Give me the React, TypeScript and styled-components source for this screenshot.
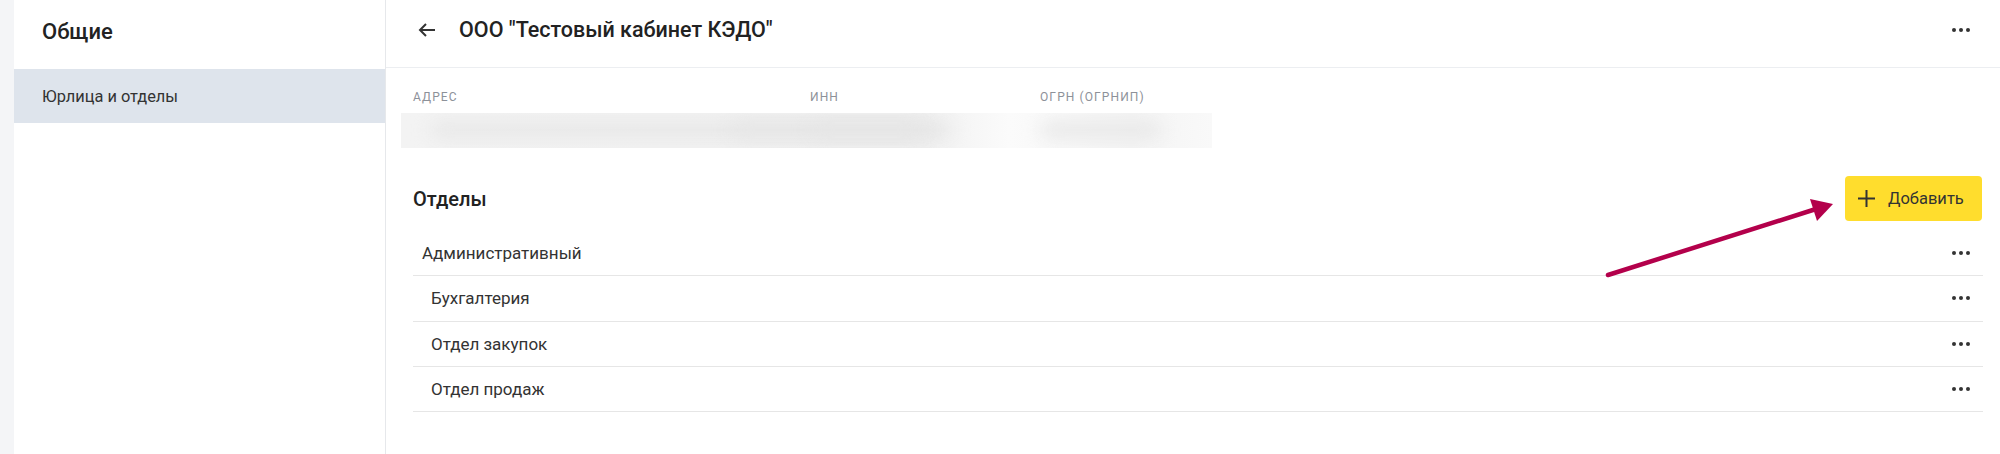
import React, { FC } from "react";
import styled, { createGlobalStyle } from "styled-components";

const GlobalStyle = createGlobalStyle`
  body {
    margin: 0;
    font-family: Roboto, "Noto Sans", sans-serif;
    color: #333333;
    background: #ffffff;
  }
`;

const departments = [
  { name: "Административный", level: 0 },
  { name: "Бухгалтерия", level: 1 },
  { name: "Отдел закупок", level: 1 },
  { name: "Отдел продаж", level: 1 },
];

const Page = styled.div`
  position: relative;
  display: flex;
  height: 454px;
  overflow: hidden;
`;

const Strip = styled.div`
  width: 14px;
  flex-shrink: 0;
  background: #f4f5f7;
`;

const Sidebar = styled.aside`
  width: 371px;
  flex-shrink: 0;
  border-right: 1px solid #e6e8eb;
`;

const SidebarTitle = styled.div`
  height: 69px;
  box-sizing: border-box;
  display: flex;
  align-items: center;
  padding: 0 0 7px 28px;
  font-size: 22px;
  font-weight: 500;
  color: #222;
`;

const SidebarItem = styled.div<{ $active?: boolean }>`
  height: 54px;
  display: flex;
  align-items: center;
  padding-left: 28px;
  font-size: 16.4px;
  background: ${(p) => (p.$active ? "#dee4ec" : "transparent")};
`;

const Main = styled.main`
  flex: 1;
  display: flex;
  flex-direction: column;
`;

const Header = styled.header`
  height: 68px;
  box-sizing: border-box;
  display: flex;
  align-items: center;
  padding: 0 30px 8px 32px;
  border-bottom: 1px solid #eceef1;
  gap: 23px;
`;

const Title = styled.h1`
  flex: 1;
  margin: 0;
  font-size: 21.5px;
  font-weight: 500;
  color: #222;
`;

const Content = styled.div`
  padding: 23px 17px 0 27px;
`;

const InfoLabels = styled.div`
  display: grid;
  grid-template-columns: 397px 230px 200px;
`;

const Label = styled.div`
  font-size: 12px;
  line-height: 13px;
  letter-spacing: 1.1px;
  text-transform: uppercase;
  color: #8d9199;
`;

const Blurred = styled.div`
  position: relative;
  margin: 9px 0 0 -12px;
  width: 811px;
  height: 35px;
  overflow: hidden;
  background: linear-gradient(90deg, #f3f3f3 0%, #f1f1f1 65%, #fbfbfb 75%, #f4f4f4 90%, #f9f9f9 100%);
`;

const Smudge = styled.span<{ $left: number; $width: number }>`
  position: absolute;
  top: 10px;
  left: ${(p) => p.$left}px;
  width: ${(p) => p.$width}px;
  height: 14px;
  border-radius: 7px;
  background: #e6e6e6;
  filter: blur(9px);
`;

const SectionHead = styled.div`
  margin-top: 28px;
  display: flex;
  align-items: center;
  justify-content: space-between;
`;

const SectionTitle = styled.h2`
  margin: 0;
  font-size: 20px;
  font-weight: 500;
  color: #222;
`;

const AddButton = styled.button`
  width: 137px;
  height: 45px;
  margin-right: 1px;
  display: flex;
  align-items: center;
  gap: 13px;
  padding: 0 0 0 13px;
  border: none;
  border-radius: 4px;
  background: #ffdd2d;
  font-family: inherit;
  font-size: 16.5px;
  color: #333;
`;

const List = styled.div`
  margin-top: 10px;
`;

const Row = styled.div<{ $level: number }>`
  height: 44.3px;
  display: flex;
  align-items: center;
  justify-content: space-between;
  padding: 0 13px 0 ${(p) => 9 + p.$level * 9}px;
  border-bottom: 1px solid #e6e6e6;
  font-size: 17px;
  color: #333;
`;

const Dots: FC = () => (
  <svg width="18" height="4" viewBox="0 0 18 4">
    <circle cx="2" cy="2" r="2" fill="#333" />
    <circle cx="9" cy="2" r="2" fill="#333" />
    <circle cx="16" cy="2" r="2" fill="#333" />
  </svg>
);

const BackIcon: FC = () => (
  <svg width="18" height="16" viewBox="0 0 18 16" fill="none" stroke="#333" strokeWidth="2">
    <path d="M17 8H2" />
    <path d="M8 2L2 8l6 6" />
  </svg>
);

const PlusIcon: FC = () => (
  <svg width="17" height="17" viewBox="0 0 17 17" stroke="#333" strokeWidth="2">
    <path d="M8.5 0v17M0 8.5h17" />
  </svg>
);

const Annotation = styled.svg`
  position: absolute;
  left: 0;
  top: 0;
  pointer-events: none;
`;

export default function App() {
  return (
    <>
      <GlobalStyle />
      <Page>
        <Strip />
        <Sidebar>
          <SidebarTitle>Общие</SidebarTitle>
          <SidebarItem $active>Юрлица и отделы</SidebarItem>
        </Sidebar>
        <Main>
          <Header>
            <BackIcon />
            <Title>ООО "Тестовый кабинет КЭДО"</Title>
            <Dots />
          </Header>
          <Content>
            <InfoLabels>
              <Label>Адрес</Label>
              <Label>ИНН</Label>
              <Label>ОГРН (ОГРНИП)</Label>
            </InfoLabels>
            <Blurred>
              <Smudge $left={30} $width={500} />
              <Smudge $left={330} $width={220} />
              <Smudge $left={410} $width={110} />
              <Smudge $left={640} $width={120} />
            </Blurred>
            <SectionHead>
              <SectionTitle>Отделы</SectionTitle>
              <AddButton>
                <PlusIcon />
                Добавить
              </AddButton>
            </SectionHead>
            <List>
              {departments.map((d) => (
                <Row key={d.name} $level={d.level}>
                  <span>{d.name}</span>
                  <Dots />
                </Row>
              ))}
            </List>
          </Content>
        </Main>
        <Annotation width="2000" height="454">
          <line x1="1608" y1="275" x2="1816" y2="209" stroke="#b3004b" strokeWidth="4.5" strokeLinecap="round" />
          <polygon points="1833,204 1810,199 1817,221" fill="#b3004b" />
        </Annotation>
      </Page>
    </>
  );
}
